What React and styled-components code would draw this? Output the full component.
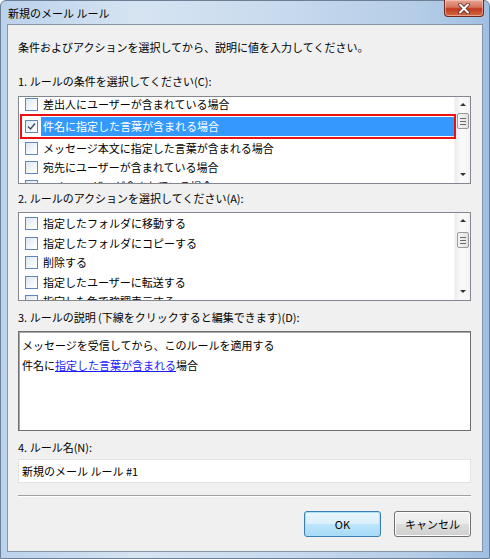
import styled, { createGlobalStyle } from "styled-components";

const GlobalStyle = createGlobalStyle`
  html, body { margin:0; padding:0; background:#ffffff; }
  body {
    font-family: "Noto Sans CJK JP", "Noto Sans", sans-serif;
    font-size:11px;
    color:#000;
  }
`;

const Window = styled.div`
  width:490px;
  height:559px;
  box-sizing:border-box;
  border:1px solid #6d7f94;
  border-radius:6px 6px 0 0;
  background:linear-gradient(to right, #bad2eb 0%, #d6e4f2 28%, #c9dbee 55%, #b5cde7 85%, #9fbfe2 100%);
  padding:0 6px 6px;
  display:flex;
  flex-direction:column;
`;

const TitleBar = styled.div`
  height:23px;
  display:flex;
  align-items:flex-start;
  justify-content:space-between;
`;

const Title = styled.div`
  padding:4px 0 0 1px;
  font-size:11px;
  line-height:16px;
  color:#000;
`;

const CloseButton = styled.div`
  width:40px;
  height:17px;
  margin:-1px -1px 0 0;
  box-sizing:border-box;
  border:1px solid #6e2a20;
  border-top:none;
  border-radius:0 0 4px 4px;
  background:linear-gradient(to bottom, #e8a493 0%, #d7735c 45%, #c0391f 55%, #d26a45 100%);
  box-shadow:inset 0 0 0 1px rgba(255,220,210,0.5);
  display:flex;
  align-items:center;
  justify-content:center;
`;

const Client = styled.div`
  flex:1;
  border:1px solid #8596aa;
  background:#f0f0f0;
  padding:14px 11px 0 10px;
  display:flex;
  flex-direction:column;
`;

const Label = styled.div`
  line-height:16px;
  height:16px;
  margin-top:${p => p.$mt || 0}px;
  white-space:nowrap;
`;

const ListBox = styled.div`
  height:${p => p.$h}px;
  box-sizing:border-box;
  margin-top:${p => p.$mt}px;
  border:1px solid #828790;
  background:#fff;
  display:flex;
  overflow:hidden;
`;

const Items = styled.div`
  flex:1;
  position:relative;
  margin-top:${p => p.$shift}px;
`;

const Row = styled.div`
  height:${p => p.$h}px;
  display:flex;
  align-items:center;
  padding-left:6px;
  position:relative;
  white-space:nowrap;
`;

const Box = styled.div`
  width:13px;
  height:13px;
  box-sizing:border-box;
  border:1px solid #5e88b8;
  background:linear-gradient(135deg, #dde7f1 0%, #f4f7fa 60%, #ffffff 100%);
  display:flex;
  align-items:center;
  justify-content:center;
  flex-shrink:0;
`;

const RowText = styled.div`
  margin-left:3px;
  padding:0 2px;
  flex:1;
  height:19px;
  line-height:19px;
  background:${p => (p.$sel ? "#3399ff" : "transparent")};
  color:${p => (p.$sel ? "#fff" : "#000")};
`;

const Marker = styled.div`
  position:absolute;
  left:1px;
  right:-2px;
  top:-1px;
  bottom:0;
  border:2px solid #ee1111;
  pointer-events:none;
  z-index:2;
`;

const ScrollBar = styled.div`
  width:15px;
  position:relative;
  background:linear-gradient(to right, #ececec 0%, #fafafa 40%, #f3f3f3 100%);
  border-left:1px solid #f4f4f4;
`;

const Arrow = styled.div`
  position:absolute;
  left:5px;
  ${p => (p.$down ? "bottom:7px;" : "top:6px;")}
  width:0;
  height:0;
  border-left:3px solid transparent;
  border-right:3px solid transparent;
  ${p => (p.$down ? "border-top:3px solid #333;" : "border-bottom:3px solid #333;")}
`;

const Thumb = styled.div`
  position:absolute;
  left:2px;
  right:1px;
  top:${p => p.$top}px;
  height:${p => p.$h}px;
  box-sizing:border-box;
  border:1px solid #9a9a9a;
  border-radius:2px;
  background:linear-gradient(to right, #f5f5f5, #e2e2e2);
  display:flex;
  flex-direction:column;
  align-items:center;
  justify-content:center;
  gap:2px;
`;

const Grip = styled.div`
  width:6px;
  height:1px;
  background:#6a6a6a;
`;

const DescBox = styled.div`
  height:100px;
  margin-top:6px;
  box-sizing:border-box;
  border:1px solid #6f6f6f;
  box-shadow:inset 1px 1px 0 #a9a9a9;
  background:#fff;
  padding:3px 3px;
`;

const DescLine = styled.div`
  line-height:20px;
  height:20px;
  white-space:nowrap;
`;

const Link = styled.span`
  color:#1a1aff;
  text-decoration:underline;
`;

const NameInput = styled.div`
  height:24px;
  margin-top:4px;
  box-sizing:border-box;
  border:1px solid #e2e2e2;
  background:#fff;
  padding-left:3px;
  line-height:22px;
`;

const Separator = styled.div`
  height:1px;
  margin-top:12px;
  background:#a0a0a0;
  box-shadow:0 1px 0 #ffffff;
`;

const ButtonRow = styled.div`
  display:flex;
  justify-content:flex-end;
  gap:13px;
  margin-top:15px;
`;

const Button = styled.div`
  width:77px;
  height:26px;
  box-sizing:border-box;
  border-radius:3px;
  border:1px solid ${p => (p.$primary ? "#3c7fb1" : "#707070")};
  box-shadow:inset 0 0 0 1px ${p => (p.$primary ? "#a6e0fb" : "#fcfcfc")};
  background:${p =>
    p.$primary
      ? "linear-gradient(to bottom, #eaf6fd 0%, #d9f0fc 50%, #bee6fd 50%, #a7d9f5 100%)"
      : "linear-gradient(to bottom, #f2f2f2 0%, #ebebeb 50%, #dddddd 50%, #cfcfcf 100%)"};
  display:flex;
  align-items:center;
  justify-content:center;
  font-size:11px;
`;

const conditions = [
  "差出人にユーザーが含まれている場合",
  "件名に指定した言葉が含まれる場合",
  "メッセージ本文に指定した言葉が含まれる場合",
  "宛先にユーザーが含まれている場合",
  "CC にユーザーが含まれている場合",
];

// first row, the selected one, then the rest
const condHeights = [21, 24, 19, 19, 19];

const actions = [
  "指定したフォルダに移動する",
  "指定したフォルダにコピーする",
  "削除する",
  "指定したユーザーに転送する",
  "指定した色で強調表示する",
];

const Check = () => (
  <svg width="9" height="9" viewBox="0 0 9 9">
    <path d="M1 4.5 L3.5 7 L8 1.5" fill="none" stroke="#3a4f6a" strokeWidth="1.4" />
  </svg>
);

const Scroll = ({ thumbTop }) => (
  <ScrollBar>
    <Arrow />
    <Thumb $top={thumbTop} $h={16}>
      <Grip />
      <Grip />
      <Grip />
    </Thumb>
    <Arrow $down />
  </ScrollBar>
);

const App = () => {
  return (
    <>
      <GlobalStyle />
      <Window>
        <TitleBar>
          <Title>新規のメール ルール</Title>
          <CloseButton>
            <svg width="14" height="11" viewBox="0 0 14 11">
              <path d="M3 1.5 L11 9.5 M11 1.5 L3 9.5" stroke="#5a2a22" strokeWidth="3.6" strokeLinecap="round" />
              <path d="M3 1.5 L11 9.5 M11 1.5 L3 9.5" stroke="#ffffff" strokeWidth="2" strokeLinecap="round" />
            </svg>
          </CloseButton>
        </TitleBar>
        <Client>
          <Label>条件およびアクションを選択してから、説明に値を入力してください。</Label>

          <Label $mt={18}>1. ルールの条件を選択してください(C):</Label>
          <ListBox $h={88} $mt={7}>
            <Items $shift={-3.5}>
              {conditions.map((c, i) => (
                <Row key={c} $h={condHeights[i]}>
                  <Box>{i === 1 && <Check />}</Box>
                  <RowText $sel={i === 1}>{c}</RowText>
                  {i === 1 && <Marker />}
                </Row>
              ))}
            </Items>
            <Scroll thumbTop={16} />
          </ListBox>

          <Label $mt={6}>2. ルールのアクションを選択してください(A):</Label>
          <ListBox $h={89} $mt={6}>
            <Items $shift={1}>
              {actions.map(a => (
                <Row key={a} $h={19.5}>
                  <Box />
                  <RowText>{a}</RowText>
                </Row>
              ))}
            </Items>
            <Scroll thumbTop={19} />
          </ListBox>

          <Label $mt={8}>3. ルールの説明 (下線をクリックすると編集できます)(D):</Label>
          <DescBox>
            <DescLine>メッセージを受信してから、このルールを適用する</DescLine>
            <DescLine>
              件名に<Link>指定した言葉が含まれる</Link>場合
            </DescLine>
          </DescBox>

          <Label $mt={8}>4. ルール名(N):</Label>
          <NameInput>新規のメール ルール #1</NameInput>

          <Separator />

          <ButtonRow>
            <Button $primary>OK</Button>
            <Button>キャンセル</Button>
          </ButtonRow>
        </Client>
      </Window>
    </>
  );
};

export default App;
